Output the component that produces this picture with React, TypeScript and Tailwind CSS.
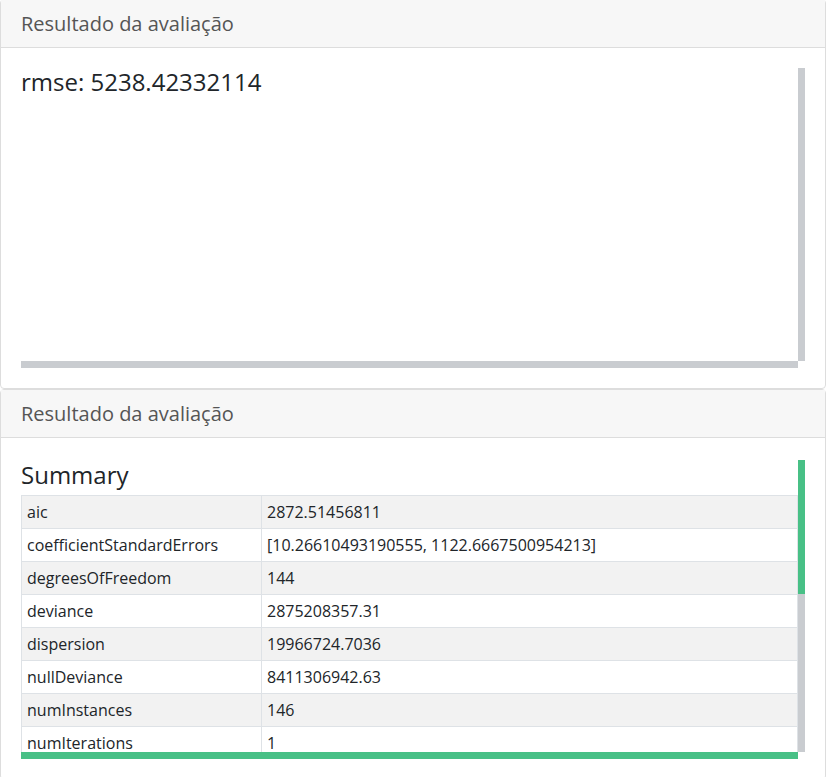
const rows: [string, string][] = [
  ["aic", "2872.51456811"],
  ["coefficientStandardErrors", "[10.26610493190555, 1122.6667500954213]"],
  ["degreesOfFreedom", "144"],
  ["deviance", "2875208357.31"],
  ["dispersion", "19966724.7036"],
  ["nullDeviance", "8411306942.63"],
  ["numInstances", "146"],
  ["numIterations", "1"],
  ["rank", "2"],
  ["residualDegreeOfFreedom", "144"],
];

const CardHeader = () => (
  <div className="h-[48px] flex items-center px-5 bg-[#f7f7f7] border-b border-[#dddddd] text-[20px] text-[#555555]">
    Resultado da avaliação
  </div>
);

const App = () => {
  return (
    <div
      className="w-[826px] h-[777px] overflow-hidden bg-white text-[#212529]"
      style={{ fontFamily: '"Open Sans", "Noto Sans", sans-serif' }}
    >
      {/* primeiro card */}
      <div className="-mt-px border border-[#dddddd] rounded">
        <CardHeader />
        <div className="p-5">
          <div className="flex h-[300px]">
            <div className="flex-1 flex flex-col">
              <div className="flex-1 overflow-hidden">
                <div className="text-[24px] leading-[1.2]">rmse: 5238.42332114</div>
              </div>
              <div className="h-[7px] bg-[#c9ccd0]" />
            </div>
            <div className="w-[7px] flex flex-col">
              <div className="flex-1 bg-[#c9ccd0]" />
              <div className="h-[7px]" />
            </div>
          </div>
        </div>
      </div>

      {/* segundo card */}
      <div className="border border-[#dddddd] rounded">
        <CardHeader />
        <div className="px-5 pt-[22px] pb-5">
          <div className="flex h-[299px]">
            <div className="flex-1 flex flex-col min-w-0">
              <div className="flex-1 overflow-hidden">
                <h3 className="text-[24px] leading-[1.2] mt-[1px] mb-[5px]">Summary</h3>
                <table className="w-full border-collapse text-[16px] leading-[22px]">
                  <tbody>
                    {rows.map(([k, v], i) => (
                      <tr key={k} className={i % 2 === 0 ? "bg-[#f2f2f2]" : "bg-white"}>
                        <td className="w-[240px] border border-[#dee2e6] px-[5px] py-[5px]">{k}</td>
                        <td className="border border-[#dee2e6] px-[5px] py-[5px]">{v}</td>
                      </tr>
                    ))}
                  </tbody>
                </table>
              </div>
              <div className="h-[7px] bg-[#48c086]" />
            </div>
            <div className="w-[7px] flex flex-col">
              <div className="h-[134px] bg-[#48c086]" />
              <div className="flex-1 bg-[#c9ccd0]" />
              <div className="h-[7px] bg-white" />
            </div>
          </div>
        </div>
      </div>
    </div>
  );
};

export default App;
